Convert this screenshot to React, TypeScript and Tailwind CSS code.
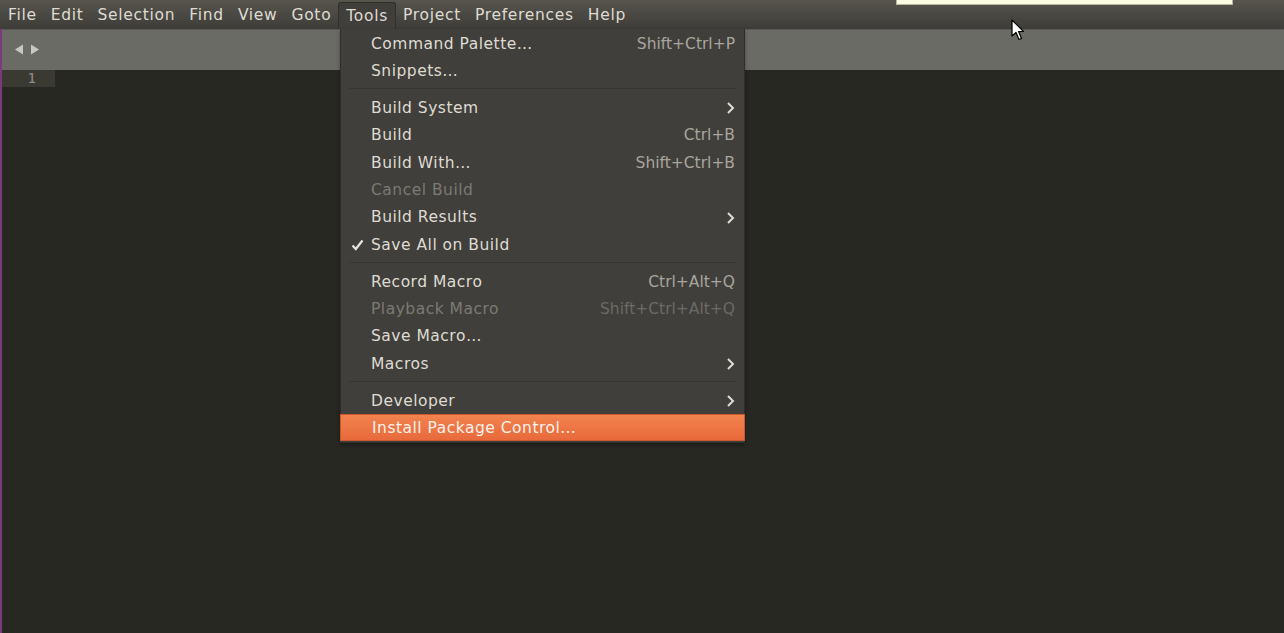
import React from "react";

const Chevron = () => (
  <svg width="9" height="14" viewBox="0 0 9 14" className="block">
    <path d="M2 2 L7 7 L2 12" fill="none" stroke="#dfdbd2" strokeWidth="2" />
  </svg>
);

const Check = () => (
  <svg width="13" height="12" viewBox="0 0 13 12" className="block">
    <path d="M1.5 6.5 L4.8 10 L11.5 1.5" fill="none" stroke="#e8e5de" strokeWidth="2.2" />
  </svg>
);

type Item =
  | { sep: true }
  | { sep?: false; label: string; shortcut?: string; disabled?: boolean; sub?: boolean; checked?: boolean; active?: boolean };

const items: Item[] = [
  { label: "Command Palette…", shortcut: "Shift+Ctrl+P" },
  { label: "Snippets…" },
  { sep: true },
  { label: "Build System", sub: true },
  { label: "Build", shortcut: "Ctrl+B" },
  { label: "Build With…", shortcut: "Shift+Ctrl+B" },
  { label: "Cancel Build", disabled: true },
  { label: "Build Results", sub: true },
  { label: "Save All on Build", checked: true },
  { sep: true },
  { label: "Record Macro", shortcut: "Ctrl+Alt+Q" },
  { label: "Playback Macro", shortcut: "Shift+Ctrl+Alt+Q", disabled: true },
  { label: "Save Macro…" },
  { label: "Macros", sub: true },
  { sep: true },
  { label: "Developer", sub: true },
  { label: "Install Package Control…", active: true },
];

const menus = ["File", "Edit", "Selection", "Find", "View", "Goto", "Tools", "Project", "Preferences", "Help"];

export default function App() {
  return (
    <div
      className="relative w-[1284px] h-[633px] overflow-hidden bg-[#272822] text-[15.5px] text-[#dfdbd2]"
      style={{ fontFamily: '"DejaVu Sans", "Noto Sans", sans-serif' }}
    >
      {/* menu bar */}
      <div className="h-[29px] flex items-stretch pl-[1px] tracking-[0.7px] bg-gradient-to-b from-[#58554e] to-[#3d3c38]">
        {menus.map((m) =>
          m === "Tools" ? (
            <div
              key={m}
              className="flex items-center px-[7px] pt-[2px] mt-[2px] bg-[#403f3b] border border-b-0 border-[#2f2e2b] rounded-t-[3px]"
            >
              {m}
            </div>
          ) : (
            <div key={m} className="flex items-center px-[7px] pt-[3px]">
              {m}
            </div>
          )
        )}
      </div>

      {/* body */}
      <div className="flex h-[604px]">
        <div className="w-[2px] bg-[#7b3a7e]" />
        <div className="flex-1 flex flex-col">
          <div className="h-[41px] bg-[#6b6b66] flex items-center pl-[12px] gap-[6px] shadow-[inset_0_1px_0_#5a5954]">
            <svg width="10" height="11" viewBox="0 0 10 11">
              <path d="M9 0.5 L1 5.5 L9 10.5 Z" fill="#c8c7c1" />
            </svg>
            <svg width="10" height="11" viewBox="0 0 10 11">
              <path d="M1 0.5 L9 5.5 L1 10.5 Z" fill="#c8c7c1" />
            </svg>
          </div>
          <div className="flex-1 bg-[#272822]">
            <div className="w-[53px] h-[17px] bg-[#3b3a32] flex items-center justify-end pr-[19px] text-[14px] text-[#8f908a]" style={{ fontFamily: '"DejaVu Sans Mono", monospace' }}>
              1
            </div>
          </div>
        </div>
      </div>

      {/* dropdown */}
      <div className="absolute left-[340px] top-[29px] w-[405px] bg-[#403f3b] border border-[#2f2e2b] border-t-0 pt-[0.5px] pb-[1px] shadow-[0_2px_4px_rgba(0,0,0,0.35)]">
        {items.map((it, i) =>
          it.sep ? (
            <div key={i} className="h-[9.5px] pt-[4px] px-[8px]">
              <div className="h-[1px] bg-[#363531]" />
            </div>
          ) : (
            <div
              key={i}
              className={
                "relative h-[27.4px] flex items-center pt-[2px] pl-[30px] pr-[9px] " +
                (it.active
                  ? "bg-gradient-to-b from-[#f2834f] to-[#e8693b] border border-[#c9582d] text-[#fdf2ec] -mx-[1px] pl-[31px]"
                  : it.disabled
                  ? "text-[#7c7a74]"
                  : "text-[#dfdbd2]")
              }
            >
              {it.checked && (
                <div className="absolute left-[10px] top-[8px]">
                  <Check />
                </div>
              )}
              <span className="flex-1 tracking-[0.5px]">{it.label}</span>
              {it.shortcut && (
                <span className={it.disabled ? "text-[#6c6a65]" : "text-[#a9a69f]"}>{it.shortcut}</span>
              )}
              {it.sub && <Chevron />}
            </div>
          )
        )}
      </div>

      {/* cream tooltip edge */}
      <div className="absolute left-[896px] top-0 w-[337px] h-[5px] bg-[#fdfbe2] border border-t-0 border-[#b9b7a6]" />

      {/* cursor */}
      <svg className="absolute left-[1011px] top-[19px]" width="14" height="22" viewBox="0 0 14 22">
        <path d="M1 1 L1 17 L5 13.5 L8 20.5 L10.5 19.5 L7.6 12.6 L12.5 12.5 Z" fill="#ffffff" stroke="#000000" strokeWidth="1.2" strokeLinejoin="round" />
      </svg>
    </div>
  );
}
